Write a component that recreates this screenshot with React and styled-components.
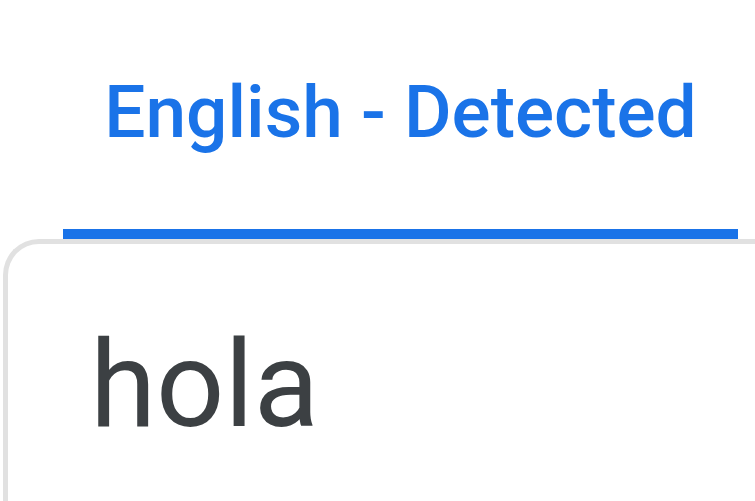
import React from "react"
import styled, { createGlobalStyle } from "styled-components"

const GlobalStyle = createGlobalStyle`
	html, body {
		margin: 0;
		padding: 0;
		background: #ffffff;
		font-family: Roboto, "Liberation Sans", sans-serif;
		overflow: hidden;
	}
`

const Page = styled.div`
	width: 755px;
	height: 501px;
	display: flex;
	flex-direction: column;
	overflow: hidden;
`

const TabRow = styled.div`
	display: flex;
	padding-left: 63px;
`

const Tab = styled.div`
	width: 675px;
	height: 239px;
	display: flex;
	flex-direction: column;
	align-items: center;
	padding-top: 70px;
	box-sizing: border-box;
	border-bottom: 10px solid #1a73e8;
`

const TabLabel = styled.span`
	font-size: 73px;
	line-height: 85px;
	font-weight: 500;
	color: #1a73e8;
	white-space: nowrap;
`

const Card = styled.div`
	flex: 1;
	margin-left: 3px;
	border: 5px solid #e1e1e1;
	border-right: none;
	border-bottom: none;
	border-top-left-radius: 36px;
	padding: 71px 0 0 82px;
`

const SourceText = styled.div`
	font-size: 120px;
	line-height: 141px;
	font-weight: 400;
	color: #3c4043;
`

const App = () => (
	<Page>
		<GlobalStyle />
		<TabRow>
			<Tab>
				<TabLabel>English - Detected</TabLabel>
			</Tab>
		</TabRow>
		<Card>
			<SourceText>hola</SourceText>
		</Card>
	</Page>
)

export default App
